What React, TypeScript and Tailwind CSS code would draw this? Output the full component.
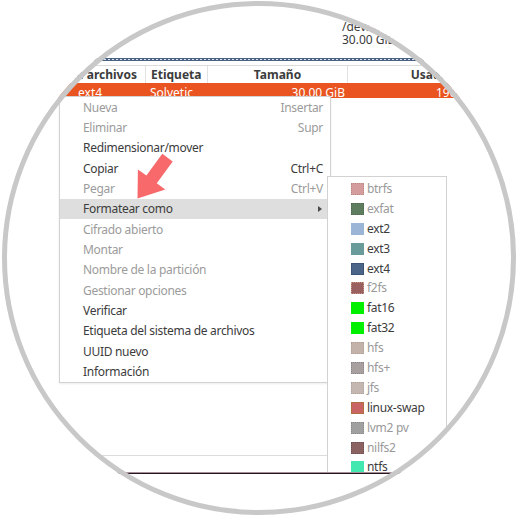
import React from "react";

type Item = { label: string; key?: string; on?: boolean; sub?: boolean; hover?: boolean };

const menuItems: Item[] = [
  { label: "Nueva", key: "Insertar" },
  { label: "Eliminar", key: "Supr" },
  { label: "Redimensionar/mover", on: true },
  { label: "Copiar", key: "Ctrl+C", on: true },
  { label: "Pegar", key: "Ctrl+V" },
  { label: "Formatear como", on: true, sub: true, hover: true },
  { label: "Cifrado abierto" },
  { label: "Montar" },
  { label: "Nombre de la partición" },
  { label: "Gestionar opciones" },
  { label: "Verificar", on: true },
  { label: "Etiqueta del sistema de archivos", on: true },
  { label: "UUID nuevo", on: true },
  { label: "Información", on: true },
];

type Fs = { name: string; on?: boolean; swatch: string };

const fsTypes: Fs[] = [
  { name: "btrfs", swatch: "bg-[#d49c9c] border-[#b98a80] border-dotted" },
  { name: "exfat", swatch: "bg-[#5e7c5e] border-[#4e6a4e] border-dotted" },
  { name: "ext2", on: true, swatch: "bg-[#9bb5d6] border-[#9bb5d6]" },
  { name: "ext3", on: true, swatch: "bg-[#6a9b9b] border-[#6a9b9b]" },
  { name: "ext4", on: true, swatch: "bg-[#4a6587] border-[#3c5475]" },
  { name: "f2fs", swatch: "bg-[#9a5f5f] border-[#c49a80] border-dotted" },
  { name: "fat16", on: true, swatch: "bg-[#00f000] border-[#00f000]" },
  { name: "fat32", on: true, swatch: "bg-[#00f000] border-[#00f000]" },
  { name: "hfs", swatch: "bg-[#c2b2aa] border-[#b0a098] border-dotted" },
  { name: "hfs+", swatch: "bg-[#a8a0a0] border-[#8c8484] border-dotted" },
  { name: "jfs", swatch: "bg-[#c4b6b0] border-[#b0a29c] border-dotted" },
  { name: "linux-swap", on: true, swatch: "bg-[#c96464] border-[#b07040]" },
  { name: "lvm2 pv", swatch: "bg-[#a0a0a0] border-[#8a8a8a] border-dotted" },
  { name: "nilfs2", swatch: "bg-[#8a6262] border-[#6e5050] border-dotted" },
  { name: "ntfs", on: true, swatch: "bg-[#42e8b0] border-[#42e8b0]" },
];

function ContextMenu() {
  return (
    <div className="absolute left-[59px] top-[96px] w-[272px] border border-[#d2d2d2] bg-white pt-[0.5px] shadow-[0_1px_2px_rgba(0,0,0,0.08)]">
      {menuItems.map((it) => (
        <div
          key={it.label}
          className={`flex h-[20.33px] items-center justify-between pl-[23px] pr-[7px] text-[12px] tracking-[-0.3px] ${
            it.hover ? "bg-[#dedede]" : ""
          } ${it.on ? "text-[#3c3c3c]" : "text-[#9b9b9b]"}`}
        >
          <span>{it.label}</span>
          {it.key && <span>{it.key}</span>}
          {it.sub && (
            <span className="mr-[1px] h-0 w-0 border-y-[3.5px] border-l-[4px] border-y-transparent border-l-[#4a4a4a]" />
          )}
        </div>
      ))}
    </div>
  );
}

function FormatMenu() {
  return (
    <div className="absolute left-[327px] top-[176px] w-[120px] border border-[#d2d2d2] bg-white pt-[2px]">
      {fsTypes.map((f) => (
        <div key={f.name} className="flex h-[19.9px] items-center gap-[3px] pl-[23px] text-[12px] tracking-[-0.3px]">
          <span className={`h-[12px] w-[13px] border ${f.swatch}`} />
          <span className={f.on ? "text-[#3c3c3c]" : "text-[#999999]"}>{f.name}</span>
        </div>
      ))}
    </div>
  );
}

function PointerArrow() {
  return (
    <svg className="pointer-events-none absolute left-0 top-0" width="520" height="520" viewBox="0 0 520 520">
      <polygon
        points="137.5,198.5 165.3,189.4 156.8,183.2 172.7,161.4 162.3,153.8 146.4,175.6 137.9,169.4"
        fill="#f7696b"
      />
    </svg>
  );
}

export default function App() {
  return (
    <div
      className="relative h-[520px] w-[520px] overflow-hidden bg-white"
      style={{ fontFamily: '"Noto Sans", "Open Sans", sans-serif' }}
    >
      <div className="relative h-[472px] overflow-hidden">
        <div className="h-[58px] pl-[342px] pt-[20px] text-[12px] leading-[13px] text-[#3c3c3c]">
          <div>/dev/sda1</div>
          <div>30.00 GiB</div>
        </div>
        <div className="h-[3px] bg-[#4a6385] px-0 py-[1px]">
          <div className="h-[1px] bg-[repeating-linear-gradient(90deg,#dfe6ee_0_2px,#4a6385_2px_4px)]" />
        </div>
        <div className="h-[4px]" />
        <div className="flex h-[18px] border-t border-[#dcdcdc] text-[12px] font-bold leading-[17px] text-[#3c3c3c]">
          <div className="flex w-[146px] justify-end border-r border-[#e2e2e2] pr-[8px]">Sistema de archivos</div>
          <div className="w-[62px] border-r border-[#e2e2e2] pl-[5px]">Etiqueta</div>
          <div className="w-[140px] border-r border-[#e2e2e2] text-center">Tamaño</div>
          <div className="w-[100px] text-right">Usado</div>
        </div>
        <div className="flex h-[15px] overflow-hidden bg-[#e95420] text-[12px] leading-[20px] text-white">
          <div className="w-[146px] pl-[78px]">ext4</div>
          <div className="w-[62px] pl-[4px]">Solvetic</div>
          <div className="w-[140px] pr-[3px] text-right">30.00 GiB</div>
          <div className="pl-[88px]">190.00 MiB</div>
        </div>
        <div className="h-[357px]" />
        <div className="h-px w-[330px] bg-[#dcdcdc]" />
        <ContextMenu />
        <FormatMenu />
      </div>
      <div className="h-[1px] bg-[#a88c9a]" />
      <div className="h-[1px] bg-[#21181c]" />
      <PointerArrow />
      <div className="pointer-events-none absolute left-[2px] top-[1px] h-[514px] w-[514px] rounded-full border-[5px] border-[#c8c8c8] shadow-[0_0_0_300px_#ffffff]" />
    </div>
  );
}
